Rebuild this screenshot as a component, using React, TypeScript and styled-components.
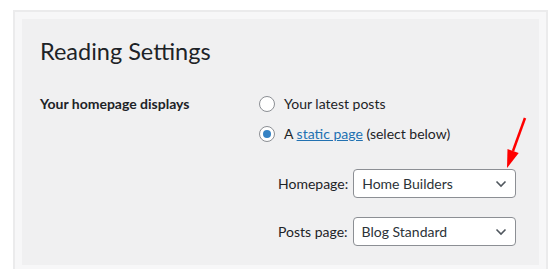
import styled, { createGlobalStyle } from "styled-components";

const GlobalStyle = createGlobalStyle`
	body {
		margin: 0;
		background: #ffffff;
		font-family: Lato, "Noto Sans", sans-serif;
		color: #1d2327;
	}
`;

const Frame = styled.div`
	margin: 10px 0 0 13px;
	width: 535px;
	box-sizing: border-box;
	border: 2px solid #ebebec;
	border-bottom: none;
	background: #f7f7f8;
	padding: 7px 7px 4px 7px;
`;

const Panel = styled.div`
	position: relative;
	background: #f0f0f1;
	height: 246px;
	box-sizing: border-box;
	padding: 18px 18px 0 18px;
`;

const Title = styled.h1`
	margin: 0;
	font-size: 23.5px;
	font-weight: 400;
	line-height: 29px;
	color: #1d2327;
`;

const FormRow = styled.div`
	display: grid;
	grid-template-columns: 219px 1fr;
	margin-top: 28px;
`;

const Label = styled.div`
	font-size: 14px;
	font-weight: 700;
	line-height: 20px;
`;

const Options = styled.div`
	display: flex;
	flex-direction: column;
	gap: 10px;
`;

const RadioRow = styled.label`
	display: flex;
	align-items: center;
	gap: 9px;
	font-size: 14px;
	line-height: 20px;
`;

const Radio = styled.span<{ $checked?: boolean }>`
	width: 16px;
	height: 16px;
	box-sizing: border-box;
	border-radius: 50%;
	border: 1px solid #8c8f94;
	background: #ffffff;
	display: flex;
	align-items: center;
	justify-content: center;

	&::after {
		content: "";
		width: 8px;
		height: 8px;
		border-radius: 50%;
		background: ${(p) => (p.$checked ? "#3582c4" : "transparent")};
	}
`;

const Link = styled.a`
	color: #2271b1;
	text-decoration: underline;
`;

const SubList = styled.div`
	display: flex;
	flex-direction: column;
	gap: 19px;
	margin-top: 15px;
	padding-left: 19px;
`;

const SelectRow = styled.div`
	display: flex;
	align-items: center;
	gap: 5px;
	font-size: 14px;
`;

const SelectBox = styled.div`
	width: 163px;
	height: 29px;
	box-sizing: border-box;
	border: 1px solid #8c8f94;
	border-radius: 4px;
	background: #ffffff;
	display: flex;
	align-items: center;
	justify-content: space-between;
	padding: 0 8px 0 8px;
	font-size: 14px;
	color: #2c3338;
`;

const Arrow = styled.svg`
	position: absolute;
	left: 480px;
	top: 95px;
`;

const Chevron = () => (
	<svg width="12" height="8" viewBox="0 0 12 8">
		<path d="M1.5 1.5 L6 6 L10.5 1.5" fill="none" stroke="#50575e" strokeWidth="1.6" />
	</svg>
);

export default function App() {
	return (
		<>
			<GlobalStyle />
			<Frame>
				<Panel>
					<Title>Reading Settings</Title>
					<FormRow>
						<Label>Your homepage displays</Label>
						<Options>
							<RadioRow>
								<Radio />
								Your latest posts
							</RadioRow>
							<RadioRow>
								<Radio $checked />
								<span>
									A <Link href="#">static page</Link> (select below)
								</span>
							</RadioRow>
							<SubList>
								<SelectRow>
									Homepage:
									<SelectBox>
										Home Builders
										<Chevron />
									</SelectBox>
								</SelectRow>
								<SelectRow>
									Posts page:
									<SelectBox>
										Blog Standard
										<Chevron />
									</SelectBox>
								</SelectRow>
							</SubList>
						</Options>
					</FormRow>
					<Arrow width="40" height="60" viewBox="0 0 40 60">
						<line x1="23" y1="4" x2="11" y2="37" stroke="#ff0000" strokeWidth="2.5" />
						<polygon points="5,54 16.7,39.1 5.5,35.1" fill="#ff0000" />
					</Arrow>
				</Panel>
			</Frame>
		</>
	);
}
